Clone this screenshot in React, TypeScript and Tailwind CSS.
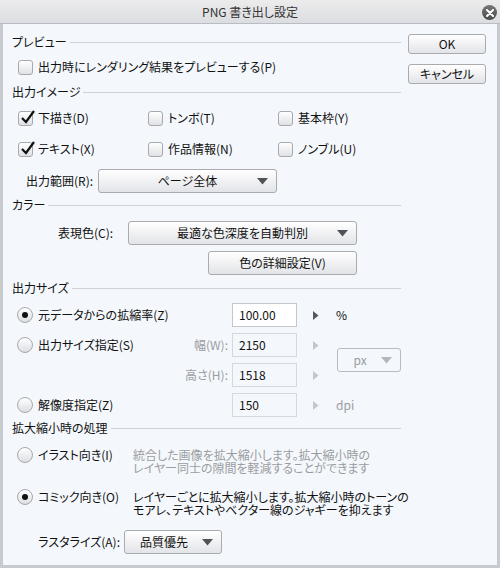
import React from "react";

const FONT = "font-['Noto_Sans_CJK_JP','Noto_Sans',sans-serif] [font-feature-settings:'palt']";

function Header({ label }: { label: string }) {
  return (
    <div className="flex h-[16px] w-[389px] items-center gap-[3px]">
      <span className="leading-none">{label}</span>
      <div className="h-px flex-1 bg-[#cfd3d9]" />
    </div>
  );
}

function CheckBox({ label, checked = false }: { label: string; checked?: boolean }) {
  return (
    <div className="flex h-[16px] items-center gap-[5px] whitespace-nowrap">
      <div className="relative h-[15px] w-[15px] rounded-[3px] border border-[#a7a9ad] bg-gradient-to-b from-white to-[#dfe1e5]">
        {checked && (
          <svg className="absolute -top-[3px] left-[1px]" width="16" height="16" viewBox="0 0 16 16">
            <path d="M2 9 L6 13 L14 2" fill="none" stroke="#111" strokeWidth="2.2" />
          </svg>
        )}
      </div>
      <span className="leading-none">{label}</span>
    </div>
  );
}

function Radio({ label, checked = false }: { label: string; checked?: boolean }) {
  return (
    <div className="flex items-center gap-[5px] whitespace-nowrap">
      <div className="flex h-[16px] w-[16px] items-center justify-center rounded-full border border-[#a7a9ad] bg-gradient-to-b from-white to-[#dcdee2]">
        {checked && <div className="h-[6px] w-[6px] rounded-full bg-[#111]" />}
      </div>
      <span className="leading-none">{label}</span>
    </div>
  );
}

function Arrow({ disabled = false }: { disabled?: boolean }) {
  return (
    <svg width="11" height="7" viewBox="0 0 11 7">
      <path d="M0 0 H11 L5.5 6.5 Z" fill={disabled ? "#b4b6ba" : "#4f5257"} />
    </svg>
  );
}

function Select({ value, className }: { value: string; className: string }) {
  return (
    <div
      className={`relative flex h-[24px] items-center justify-center rounded-[3px] border border-[#a9abaf] bg-gradient-to-b from-white to-[#e3e4e8] ${className}`}
    >
      <span className="leading-none">{value}</span>
      <div className="absolute right-[8px] top-[8px] flex">
        <Arrow />
      </div>
    </div>
  );
}

function Button({ label, className }: { label: string; className: string }) {
  return (
    <div
      className={`flex items-center justify-center rounded-[3px] border border-[#a9abaf] bg-gradient-to-b from-white to-[#e3e4e8] leading-none ${className}`}
    >
      {label}
    </div>
  );
}

function NumberField({ value, enabled = false }: { value: string; enabled?: boolean }) {
  return (
    <div
      className={`flex h-[24px] w-[65px] items-center border pl-[6px] leading-none ${
        enabled ? "border-[#c3c6cb] bg-white" : "border-[#d5d8dd] bg-[#f4f7fb]"
      }`}
    >
      {value}
    </div>
  );
}

function Spin({ enabled = false }: { enabled?: boolean }) {
  return (
    <svg width="6" height="9" viewBox="0 0 6 9" className="ml-[16px]">
      <path d="M0 0 L5.5 4.5 L0 9 Z" fill={enabled ? "#55585d" : "#c3c6cb"} />
    </svg>
  );
}

function SizeRow({
  radio,
  fieldLabel,
  value,
  unit,
  enabled = false,
}: {
  radio?: React.ReactNode;
  fieldLabel?: string;
  value: string;
  unit?: string;
  enabled?: boolean;
}) {
  return (
    <div className="flex h-[24px] items-center">
      <div className="flex w-[215px] items-center justify-between pr-[4px]">
        <div>{radio}</div>
        {fieldLabel && <span className="leading-none text-[#9a9da2]">{fieldLabel}</span>}
      </div>
      <NumberField value={value} enabled={enabled} />
      <Spin enabled={enabled} />
      {unit && (
        <span className={`ml-[17px] leading-none ${enabled ? "text-[#111]" : "text-[#9a9da2]"}`}>{unit}</span>
      )}
    </div>
  );
}

export default function App() {
  return (
    <div className={`flex h-[568px] w-[500px] flex-col bg-[#c7cacf] px-[3px] pb-[3px] text-[12px] text-[#111] ${FONT}`}>
      {/* title bar */}
      <div className="relative -mx-[3px] flex h-[24px] items-center justify-center border-b border-[#b9bcc1] bg-gradient-to-b from-[#ececed] to-[#dcdde0]">
        <span className="leading-none text-[#333]">PNG 書き出し設定</span>
        <div className="absolute right-[3px] top-[5px] flex h-[15px] w-[15px] items-center justify-center rounded-full bg-gradient-to-b from-[#777] to-[#4a4a4a]">
          <svg width="8" height="8" viewBox="0 0 8 8">
            <path d="M1 1 L7 7 M7 1 L1 7" stroke="#fff" strokeWidth="2" strokeLinecap="round" />
          </svg>
        </div>
      </div>

      <div className="flex flex-1 gap-[7px] bg-[#f4f7fb] pl-[9px] pt-[10px]">
        {/* left column */}
        <div className="flex w-[389px] flex-col">
          <Header label="プレビュー" />
          <div className="mt-[9px] pl-[6px]">
            <CheckBox label="出力時にレンダリング結果をプレビューする(P)" />
          </div>

          <div className="mt-[9px]">
            <Header label="出力イメージ" />
          </div>
          <div className="mt-[10px] grid grid-cols-[130px_130px_1fr] gap-y-[15px] pl-[6px]">
            <CheckBox label="下描き(D)" checked />
            <CheckBox label="トンボ(T)" />
            <CheckBox label="基本枠(Y)" />
            <CheckBox label="テキスト(X)" checked />
            <CheckBox label="作品情報(N)" />
            <CheckBox label="ノンブル(U)" />
          </div>
          <div className="mt-[12px] flex items-center pl-[14px]">
            <span className="w-[72px] whitespace-nowrap leading-none">出力範囲(R):</span>
            <Select value="ページ全体" className="w-[179px]" />
          </div>

          <div className="mt-[4px]">
            <Header label="カラー" />
          </div>
          <div className="mt-[8px] flex items-center pl-[46px]">
            <span className="w-[70px] whitespace-nowrap leading-none">表現色(C):</span>
            <Select value="最適な色深度を自動判別" className="w-[229px]" />
          </div>
          <div className="mt-[6px] pl-[196px]">
            <Button label="色の詳細設定(V)" className="h-[24px] w-[149px]" />
          </div>

          <div className="mt-[5px]">
            <Header label="出力サイズ" />
          </div>
          <div className="mt-[7px] flex flex-col gap-[6px] pl-[5px]">
            <SizeRow radio={<Radio label="元データからの拡縮率(Z)" checked />} value="100.00" unit="%" enabled />
            <div className="flex items-center">
              <div className="flex w-[321px] flex-col gap-[6px]">
                <SizeRow radio={<Radio label="出力サイズ指定(S)" />} fieldLabel="幅(W):" value="2150" />
                <SizeRow fieldLabel="高さ(H):" value="1518" />
              </div>
              <div className="relative flex h-[24px] w-[64px] items-center justify-center rounded-[3px] border border-[#b9bbbf] bg-[#f4f7fb] pr-[18px]">
                <span className="leading-none text-[#9a9da2]">px</span>
                <div className="absolute right-[8px] top-[8px] flex">
                  <Arrow disabled />
                </div>
              </div>
            </div>
            <SizeRow radio={<Radio label="解像度指定(Z)" />} value="150" unit="dpi" />
          </div>

          <div className="mt-[3px]">
            <Header label="拡大縮小時の処理" />
          </div>
          <div className="mt-[12px] flex items-start pl-[5px]">
            <div className="flex h-[13px] w-[116px] shrink-0 items-center">
              <Radio label="イラスト向き(I)" />
            </div>
            <div className="whitespace-nowrap leading-[13px] text-[#9a9da2]">
              統合した画像を拡大縮小します。拡大縮小時の
              <br />
              レイヤー同士の隙間を軽減することができます
            </div>
          </div>
          <div className="mt-[16px] flex items-start pl-[5px]">
            <div className="flex h-[13px] w-[116px] shrink-0 items-center">
              <Radio label="コミック向き(O)" checked />
            </div>
            <div className="whitespace-nowrap leading-[13px]">
              レイヤーごとに拡大縮小します。拡大縮小時のトーンの
              <br />
              モアレ、テキストやベクター線のジャギーを抑えます
            </div>
          </div>
          <div className="mt-[14px] flex items-center gap-[4px]">
            <span className="w-[108px] whitespace-nowrap text-right leading-none">ラスタライズ(A):</span>
            <Select value="品質優先" className="w-[98px] pr-[18px]" />
          </div>
        </div>

        {/* right column */}
        <div className="flex flex-col gap-[10px]">
          <Button label="OK" className="h-[20px] w-[78px]" />
          <Button label="キャンセル" className="h-[20px] w-[78px]" />
        </div>
      </div>
    </div>
  );
}
